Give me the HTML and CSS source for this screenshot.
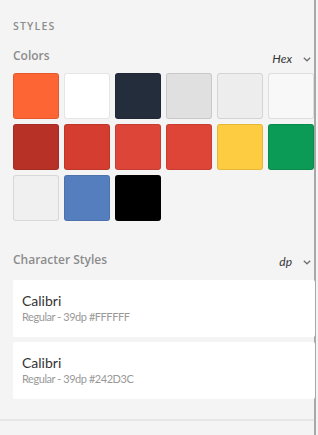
FILE: index.html
```html
<!DOCTYPE html>
<html>
<head>
<meta charset="utf-8">
<link rel="stylesheet" href="styles.css">
</head>
<body>
<div class="panel">
  <h2 class="section-title">STYLES</h2>

  <div class="group-head colors-head">
    <span class="group-label">Colors</span>
    <span class="unit">Hex<svg class="chev" width="8" height="5" viewBox="0 0 8 5"><path d="M0.8 0.8 L4 3.8 L7.2 0.8" fill="none" stroke="#707070" stroke-width="1.3"/></svg></span>
  </div>

  <div class="swatches">
    <div class="sw" style="background:#fe6534"></div>
    <div class="sw" style="background:#ffffff"></div>
    <div class="sw" style="background:#242d3c"></div>
    <div class="sw" style="background:#e0e0e0"></div>
    <div class="sw" style="background:#ededed"></div>
    <div class="sw" style="background:#f8f8f8"></div>
    <div class="sw" style="background:#b73127"></div>
    <div class="sw" style="background:#d43d2f"></div>
    <div class="sw" style="background:#dd4539"></div>
    <div class="sw" style="background:#de4537"></div>
    <div class="sw" style="background:#fecc40"></div>
    <div class="sw" style="background:#0c9b57"></div>
    <div class="sw" style="background:#f0f0f0"></div>
    <div class="sw" style="background:#557ebf"></div>
    <div class="sw" style="background:#000000"></div>
  </div>

  <div class="group-head char-head">
    <span class="group-label">Character Styles</span>
    <span class="unit">dp<svg class="chev" width="8" height="5" viewBox="0 0 8 5"><path d="M0.8 0.8 L4 3.8 L7.2 0.8" fill="none" stroke="#707070" stroke-width="1.3"/></svg></span>
  </div>

  <div class="cards">
    <div class="card">
      <div class="card-title">Calibri</div>
      <div class="card-sub">Regular - 39dp #FFFFFF</div>
    </div>
    <div class="card">
      <div class="card-title">Calibri</div>
      <div class="card-sub">Regular - 39dp #242D3C</div>
    </div>
  </div>

  <div class="divider"></div>
</div>
</body>
</html>
```

FILE: styles.css
```css
html, body {
  margin: 0;
  padding: 0;
  background: #f4f4f4;
}
body {
  width: 318px;
  height: 435px;
  overflow: hidden;
  font-family: Lato, "Open Sans", sans-serif;
}
.panel {
  width: 316px;
  height: 435px;
  box-sizing: border-box;
  border-right: 2px solid #a8a8a8;
  padding: 18px 0 0 13px;
}
.section-title {
  margin: 0;
  font-family: "Open Sans", sans-serif;
  font-size: 10.5px;
  line-height: 16px;
  font-weight: 600;
  letter-spacing: 1.2px;
  color: #8c8c8c;
}
.group-head {
  display: flex;
  align-items: baseline;
  justify-content: space-between;
  padding-right: 3px;
  height: 16px;
  line-height: 16px;
}
.colors-head {
  margin-top: 14px;
}
.char-head {
  margin-top: 31px;
}
.group-label {
  font-family: "Open Sans", sans-serif;
  font-size: 12px;
  font-weight: 600;
  color: #8c8c8c;
}
.colors-head .unit {
  position: relative;
  top: 3px;
}
.char-head .unit {
  position: relative;
  top: 2px;
}
.unit {
  font-size: 12px;
  font-style: italic;
  color: #333;
  display: flex;
  align-items: center;
  gap: 11px;
}
.chev {
  display: block;
}
.swatches {
  margin-top: 9px;
  display: grid;
  grid-template-columns: repeat(6, 46px);
  grid-auto-rows: 46px;
  gap: 5px;
}
.sw {
  box-sizing: border-box;
  border: 1px solid rgba(0, 0, 0, 0.1);
  border-radius: 3px;
}
.cards {
  margin-top: 12px;
  display: flex;
  flex-direction: column;
  gap: 5px;
  width: 302px;
}
.card {
  background: #fff;
  border-radius: 2px;
  height: 57px;
  box-sizing: border-box;
  padding: 12px 9px 0;
}
.card-title {
  font-size: 14px;
  line-height: 18px;
  color: #333;
}
.card-sub {
  font-size: 11px;
  line-height: 14px;
  letter-spacing: -0.45px;
  color: #999;
}
.divider {
  margin-top: 20px;
  margin-left: -13px;
  height: 2px;
  background: #e6e6e6;
}
```
